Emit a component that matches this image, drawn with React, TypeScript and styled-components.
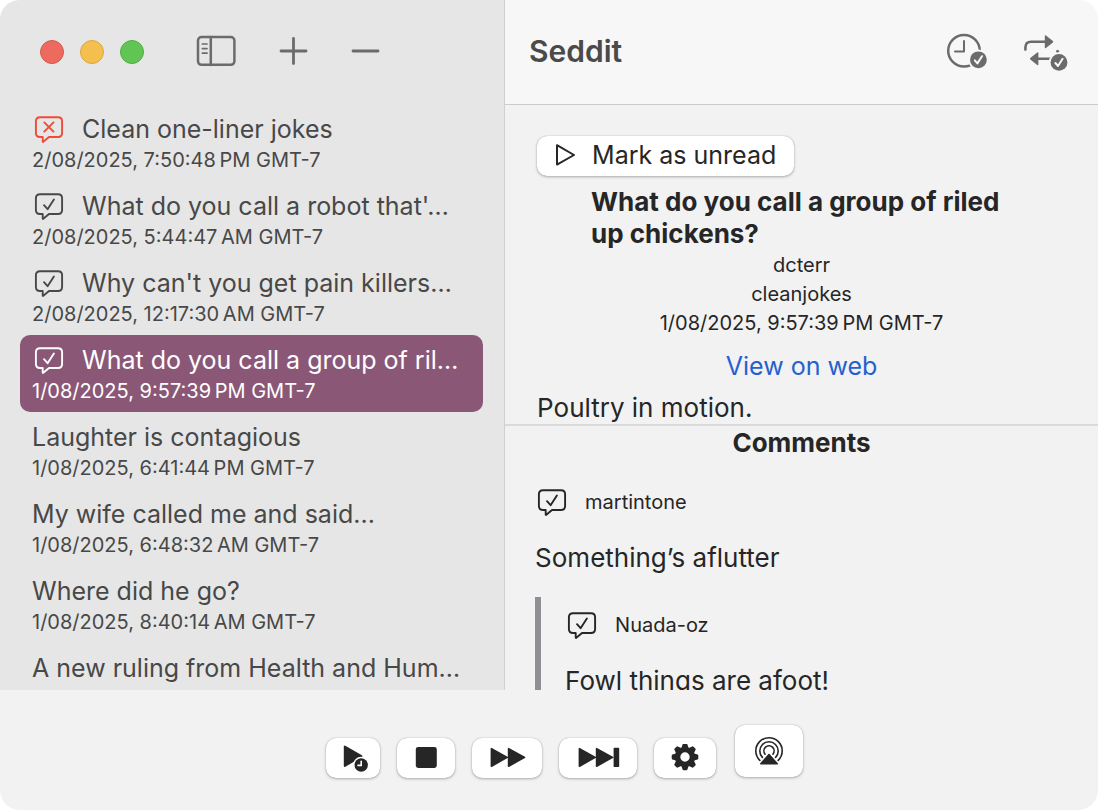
import React from 'react';
import styled, { createGlobalStyle, css } from 'styled-components';

const GlobalStyle = createGlobalStyle`
  *, *::before, *::after { box-sizing: border-box; }
  html, body { margin: 0; background: #ffffff; }
  body, button { font-family: Inter, "Liberation Sans", sans-serif; }
  h1, h2, h3, p, ul { margin: 0; padding: 0; }
  svg { flex: none; }
`;

const ink = '#262626';
const sidebarInk = '#484848';
const toolGrey = '#6b6b6b';

const Window = styled.div`
  display: grid;
  grid-template-rows: minmax(0, 1fr) 120px;
  height: 100vh;
  border-radius: 20px;
  overflow: hidden;
  background: #f2f2f2;
  color: ${ink};
`;

const Panes = styled.div`
  display: grid;
  grid-template-columns: 46% minmax(0, 1fr);
  min-height: 0;
`;

const Sidebar = styled.aside`
  display: flex;
  flex-direction: column;
  min-height: 0;
  overflow: hidden;
  background: #e6e6e6;
  border-right: 1px solid #d0d0d0;
  color: ${sidebarInk};
`;

const SidebarBar = styled.div`
  flex: none;
  display: flex;
  align-items: center;
  height: 104px;
  padding-left: 40px;
`;

const TrafficLights = styled.div`
  display: flex;
  gap: 16px;
  margin-right: 52px;
`;

const Light = styled.button<{ $fill: string; $edge: string }>`
  width: 24px;
  height: 24px;
  padding: 0;
  border-radius: 50%;
  border: 1px solid ${(p) => p.$edge};
  background: ${(p) => p.$fill};
`;

const ToolButton = styled.button`
  display: flex;
  padding: 0;
  border: 0;
  background: none;
  color: ${toolGrey};
`;

const SidebarTools = styled.div`
  display: flex;
  align-items: center;
  gap: 42px;
  padding-bottom: 2px;
`;

const PostList = styled.ul`
  list-style: none;
  padding: 0 21px 0 20px;
`;

const PostRow = styled.li<{ $selected?: boolean }>`
  height: 77px;
  padding: 9px 12px 0;
  border-radius: 10px;
  white-space: nowrap;
  ${(p) =>
    p.$selected &&
    css`
      background: #8b5777;
      color: #ffffff;
    `}
`;

const PostTitle = styled.h2`
  display: flex;
  align-items: center;
  gap: 18px;
  margin-bottom: 1px;
  font-size: 25px;
  font-weight: 400;
  line-height: 32px;
`;

const StatusIcon = styled.span<{ $failed?: boolean }>`
  display: flex;
  flex: none;
  margin-left: 2px;
  color: ${(p) => (p.$failed ? '#ee4b38' : 'inherit')};
`;

const Small = styled.p`
  font-size: 20px;
  line-height: 29px;
`;

const Detail = styled.main`
  display: flex;
  flex-direction: column;
  min-height: 0;
  overflow: hidden;
`;

const DetailBar = styled.header`
  flex: none;
  display: flex;
  align-items: center;
  justify-content: space-between;
  height: 105px;
  padding: 0 30px 0 24px;
  background: #f7f7f7;
  border-bottom: 1px solid #cbcbcb;
`;

const AppTitle = styled.h1`
  padding-bottom: 2px;
  font-size: 30px;
  font-weight: 600;
  line-height: 36px;
  color: #4a4a4a;
`;

const DetailTools = styled.div`
  display: flex;
  gap: 34px;
`;

const Article = styled.article`
  padding: 31px 32px 1px;
  border-bottom: 2px solid #dadada;
`;

const PushButton = styled.button`
  display: flex;
  align-items: center;
  justify-content: center;
  gap: 17px;
  height: 40px;
  padding: 0 18px 2px;
  border: 0;
  border-radius: 10px;
  background: #ffffff;
  color: ${ink};
  font-size: 25px;
  line-height: 32px;
  box-shadow: 0 0 1px rgba(0, 0, 0, 0.3), 0 1px 3px rgba(0, 0, 0, 0.28);
`;

const PlayerButton = styled(PushButton)<{ $width: number }>`
  width: ${(p) => p.$width}px;
  padding: 0;
`;

const AirPlayButton = styled(PlayerButton)`
  height: 52px;
  margin: 0 0 1px 2px;
`;

const Headline = styled.h2`
  padding: 0 54px;
  margin-top: 10px;
  font-size: 26px;
  font-weight: 700;
  line-height: 32px;
`;

const Meta = styled.div`
  margin-top: 1px;
  text-align: center;
`;

const WebLink = styled.a`
  display: block;
  margin-top: 12px;
  color: #2660cf;
  font-size: 25px;
  line-height: 32px;
  text-decoration: none;
`;

const Body = styled.p`
  font-size: 26px;
  line-height: 31px;
`;

const ArticleBody = styled(Body)`
  margin-top: 10px;
`;

const Comments = styled.section`
  padding: 1px 30px 0;
`;

const CommentsTitle = styled.h3`
  margin-bottom: 27px;
  font-size: 26px;
  font-weight: 700;
  line-height: 32px;
  text-align: center;
`;

const Comment = styled.div`
  display: flex;
  flex-direction: column;
  gap: 24px;
`;

const CommentAuthor = styled.div`
  display: flex;
  align-items: center;
  gap: 18px;
  height: 32px;
`;

const Replies = styled.div`
  padding: 12px 0 16px 24px;
  border-left: 6px solid #8e8e93;
`;

const Player = styled.footer`
  display: flex;
  align-items: flex-end;
  justify-content: center;
  gap: 17px;
  padding: 0 0 32px 31px;
`;

function CommentIcon({ failed }: { failed?: boolean }) {
  return (
    <StatusIcon $failed={failed}>
      <svg width="30" height="28" viewBox="0 0 30 28" fill="none" stroke="currentColor" strokeWidth="1.9" strokeLinejoin="round" strokeLinecap="round">
        <path d="M6 2.2H24C26.6 2.2 28.1 3.7 28.1 6.2V18C28.1 20.6 26.6 22 24 22H15L9.3 26.8C9 27.1 8.7 27 8.7 26.5V22H6C3.4 22 1.9 20.6 1.9 18V6.2C1.9 3.7 3.4 2.2 6 2.2Z" />
        {failed ? <path d="M10.3 7.4L19.5 16.6M19.5 7.4L10.3 16.6" /> : <path d="M10 13.2L13.6 17.2L19.9 7.6" />}
      </svg>
    </StatusIcon>
  );
}

function SidebarIcon() {
  return (
    <svg width="40" height="32" viewBox="0 0 40 32" fill="none" stroke="currentColor" strokeWidth="2.5" strokeLinecap="round">
      <rect x="2" y="2" width="36.4" height="27.8" rx="3.6" />
      <path d="M14.8 2V30" />
      <path strokeWidth="1.7" d="M6.4 9H11M6.4 13.6H11M6.4 18.2H11" />
    </svg>
  );
}

function PlusIcon() {
  return (
    <svg width="30" height="30" viewBox="0 0 30 30" stroke="currentColor" strokeWidth="2.8" strokeLinecap="round">
      <path d="M3 15H28M15.5 2.5V27.5" />
    </svg>
  );
}

function MinusIcon() {
  return (
    <svg width="30" height="30" viewBox="0 0 30 30" stroke="currentColor" strokeWidth="2.8" strokeLinecap="round">
      <path d="M3 15H28" />
    </svg>
  );
}

function CheckBadge({ x, y }: { x: number; y: number }) {
  return (
    <g>
      <circle cx={x} cy={y} r="10.2" fill="#f7f7f7" />
      <circle cx={x} cy={y} r="8.4" fill="currentColor" />
      <path d={`M${x - 3.6} ${y + 0.6}L${x - 1} ${y + 3.6}L${x + 3.6} ${y - 3.6}`} fill="none" stroke="#f7f7f7" strokeWidth="2" strokeLinecap="round" strokeLinejoin="round" />
    </g>
  );
}

function ClockCheckIcon() {
  return (
    <svg width="42" height="40" viewBox="0 0 42 40" fill="none">
      <circle cx="18" cy="18.8" r="15.8" stroke="currentColor" strokeWidth="2.5" />
      <path d="M18 9V19.6H9" stroke="currentColor" strokeWidth="2" strokeLinecap="round" strokeLinejoin="round" />
      <CheckBadge x={32.4} y={27.8} />
    </svg>
  );
}

function RepeatCheckIcon() {
  return (
    <svg width="46" height="40" viewBox="0 0 46 40" fill="none">
      <path d="M3.4 17.6V15.4C3.4 11.6 5.4 9.7 9.2 9.7H23" stroke="currentColor" strokeWidth="2.6" strokeLinecap="round" />
      <path d="M22.8 3.9C22.8 3.2 23.4 3 24 3.5L30.9 9C31.4 9.4 31.4 10 30.9 10.4L24 16C23.4 16.4 22.8 16.2 22.8 15.5Z" fill="currentColor" />
      <path d="M15 26.7H30" stroke="currentColor" strokeWidth="2.6" />
      <path d="M16.4 20.9C16.4 20.2 15.8 20 15.2 20.5L8.3 26C7.8 26.4 7.8 27 8.3 27.4L15.2 33C15.8 33.4 16.4 33.2 16.4 32.5Z" fill="currentColor" />
      <circle cx="35.6" cy="19.2" r="1.5" fill="currentColor" />
      <CheckBadge x={37} y={30.4} />
    </svg>
  );
}

function PlayOutlineIcon() {
  return (
    <svg width="20" height="24" viewBox="0 0 20 24" fill="none" stroke="currentColor" strokeWidth="2" strokeLinejoin="round">
      <path d="M2 2.2V21.6L19 12Z" />
    </svg>
  );
}

function PlayClockIcon() {
  return (
    <svg width="30" height="28" viewBox="-4 0 30 28" fill="none">
      <path d="M2.8 2.6V22L19.4 12.2Z" fill="currentColor" stroke="currentColor" strokeWidth="2" strokeLinejoin="round" />
      <circle cx="19.2" cy="21" r="8.2" fill="#ffffff" />
      <circle cx="19.2" cy="21" r="6.7" fill="currentColor" />
      <path d="M19.2 17.2V21.4H16" stroke="#ffffff" strokeWidth="1.6" strokeLinecap="round" />
    </svg>
  );
}

function StopIcon() {
  return (
    <svg width="22" height="22" viewBox="0 0 22 22" fill="currentColor">
      <rect x="0.8" y="0" width="21" height="21" rx="2.4" />
    </svg>
  );
}

function ForwardIcon() {
  return (
    <svg width="38" height="22" viewBox="-2 0 38 22" fill="currentColor" stroke="currentColor" strokeWidth="1.6" strokeLinejoin="round">
      <path d="M1.4 1.6V19.2L17.2 10.4ZM18.6 1.6V19.2L34.6 10.4Z" />
    </svg>
  );
}

function NextIcon() {
  return (
    <svg width="44" height="22" viewBox="-2 0 44 22" fill="currentColor" stroke="currentColor" strokeWidth="1.6" strokeLinejoin="round">
      <path d="M1.4 1.6V19.2L17.2 10.4ZM18.6 1.6V19.2L34.6 10.4ZM36.4 1.6H40.4V19.2H36.4Z" />
    </svg>
  );
}

function GearIcon() {
  const teeth = [0, 45, 90, 135, 180, 225, 270, 315];
  return (
    <svg width="28" height="28" viewBox="-14 -13 28 28">
      <circle r="7.4" fill="none" stroke="currentColor" strokeWidth="5.4" />
      {teeth.map((angle) => (
        <path key={angle} transform={`rotate(${angle})`} d="M-3.6 -9L-2.4 -12.6Q-2.1 -13.3 -1.3 -13.3H1.3Q2.1 -13.3 2.4 -12.6L3.6 -9Z" fill="currentColor" />
      ))}
    </svg>
  );
}

function AirPlayIcon() {
  return (
    <svg width="30" height="30" viewBox="-15 -15 30 30" fill="none" stroke="currentColor" strokeWidth="1.6" strokeLinecap="round">
      <path d="M-9.2 9.4A13.2 13.2 0 1 1 9.2 9.4" />
      <path d="M-6.6 6.4A9.2 9.2 0 1 1 6.6 6.4" />
      <path d="M-3.9 3.2A5.1 5.1 0 1 1 3.9 3.2" />
      <path d="M0 3.6L8.2 12.8H-8.2Z" fill="currentColor" strokeLinejoin="round" />
    </svg>
  );
}

type Post = { title: string; date: string; status?: 'read' | 'failed'; selected?: boolean };

const posts: Post[] = [
  { title: 'Clean one-liner jokes', date: '2/08/2025, 7:50:48\u2009PM GMT-7', status: 'failed' },
  { title: "What do you call a robot that'…", date: '2/08/2025, 5:44:47\u2009AM GMT-7', status: 'read' },
  { title: "Why can't you get pain killers…", date: '2/08/2025, 12:17:30\u2009AM GMT-7', status: 'read' },
  { title: 'What do you call a group of ril…', date: '1/08/2025, 9:57:39\u2009PM GMT-7', status: 'read', selected: true },
  { title: 'Laughter is contagious', date: '1/08/2025, 6:41:44\u2009PM GMT-7' },
  { title: 'My wife called me and said...', date: '1/08/2025, 6:48:32\u2009AM GMT-7' },
  { title: 'Where did he go?', date: '1/08/2025, 8:40:14\u2009AM GMT-7' },
  { title: 'A new ruling from Health and Hum…', date: '' },
];

export default function App() {
  return (
    <Window>
      <GlobalStyle />
      <Panes>
        <Sidebar>
          <SidebarBar>
            <TrafficLights>
              <Light aria-label="Close" $fill="#ed6a5f" $edge="#d8584e" />
              <Light aria-label="Minimise" $fill="#f5bf4f" $edge="#dba73f" />
              <Light aria-label="Zoom" $fill="#61c554" $edge="#4fae43" />
            </TrafficLights>
            <SidebarTools>
              <ToolButton aria-label="Toggle sidebar"><SidebarIcon /></ToolButton>
              <ToolButton aria-label="Add"><PlusIcon /></ToolButton>
              <ToolButton aria-label="Remove"><MinusIcon /></ToolButton>
            </SidebarTools>
          </SidebarBar>
          <PostList>
            {posts.map((post) => (
              <PostRow key={post.title} $selected={post.selected}>
                <PostTitle>
                  {post.status && <CommentIcon failed={post.status === 'failed'} />}
                  {post.title}
                </PostTitle>
                <Small>{post.date}</Small>
              </PostRow>
            ))}
          </PostList>
        </Sidebar>
        <Detail>
          <DetailBar>
            <AppTitle>Seddit</AppTitle>
            <DetailTools>
              <ToolButton aria-label="History"><ClockCheckIcon /></ToolButton>
              <ToolButton aria-label="Repeat"><RepeatCheckIcon /></ToolButton>
            </DetailTools>
          </DetailBar>
          <Article>
            <PushButton><PlayOutlineIcon />Mark as unread</PushButton>
            <Headline>What do you call a group of riled up chickens?</Headline>
            <Meta>
              <Small>dcterr</Small>
              <Small>cleanjokes</Small>
              <Small>{'1/08/2025, 9:57:39\u2009PM GMT-7'}</Small>
              <WebLink href="#post">View on web</WebLink>
            </Meta>
            <ArticleBody>Poultry in motion.</ArticleBody>
          </Article>
          <Comments>
            <CommentsTitle>Comments</CommentsTitle>
            <Comment>
              <CommentAuthor><CommentIcon /><Small>martintone</Small></CommentAuthor>
              <Body>Something’s aflutter</Body>
              <Replies>
                <Comment>
                  <CommentAuthor><CommentIcon /><Small>Nuada-oz</Small></CommentAuthor>
                  <Body>Fowl things are afoot!</Body>
                </Comment>
              </Replies>
            </Comment>
          </Comments>
        </Detail>
      </Panes>
      <Player>
        <PlayerButton aria-label="Play queue" $width={54}><PlayClockIcon /></PlayerButton>
        <PlayerButton aria-label="Stop" $width={58}><StopIcon /></PlayerButton>
        <PlayerButton aria-label="Fast forward" $width={70}><ForwardIcon /></PlayerButton>
        <PlayerButton aria-label="Next" $width={78}><NextIcon /></PlayerButton>
        <PlayerButton aria-label="Settings" $width={62}><GearIcon /></PlayerButton>
        <AirPlayButton aria-label="AirPlay" $width={68}><AirPlayIcon /></AirPlayButton>
      </Player>
    </Window>
  );
}
